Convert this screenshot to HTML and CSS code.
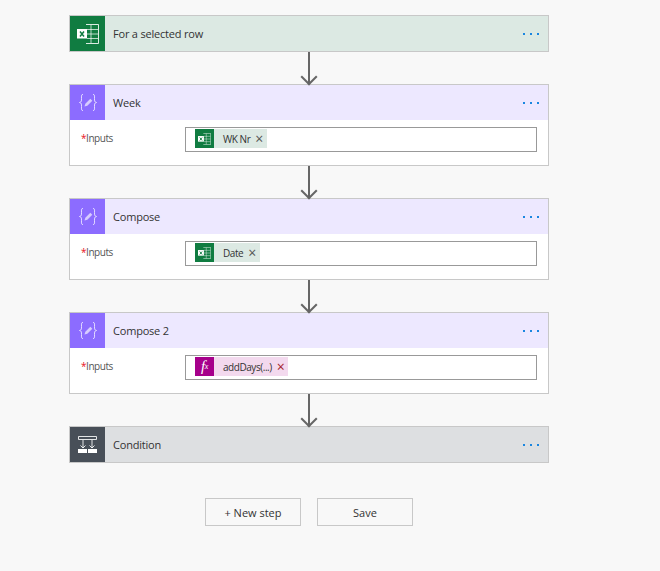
FILE: index.html
```html
<!DOCTYPE html>
<html lang="en">
<head>
  <meta charset="UTF-8">
  <meta name="viewport" content="width=device-width, initial-scale=1.0">
  <title>Flow editor</title>
  <link rel="stylesheet" href="styles.css">
</head>

<body>
  <!-- ===== ICONS ===== -->
  <svg class="defs" width="0" height="0">
    <symbol id="excel" viewBox="0 0 22 20">
      <path d="M9 .5h12.500v19H9" fill="none" stroke="#fff" stroke-opacity=".85"/>
      <path d="M14 1v18M10 5.500h11M10 10h11M10 14.500h11" fill="none" stroke="#fff" stroke-opacity=".7"/>
      <rect x="0" y="5" width="10" height="9.500" fill="#fff"/>
      <path d="M3 7.500l4 5M7 7.500l-4 5" stroke="#107c41" stroke-width="1.500"/>
    </symbol>
    <symbol id="braces" viewBox="0 0 18 17">
      <path d="M4 .5C2 .5 2.500 2 2.500 4.500S2.500 8 .5 8.500C2.500 9 2.500 10 2.500 12.500S2 16.500 4 16.500" fill="none" stroke="#fff" stroke-width=".9" stroke-opacity=".85"/>
      <path d="M14 .5C16 .5 15.500 2 15.500 4.500S15.500 8 17.500 8.500C15.500 9 15.500 10 15.500 12.500S16 16.500 14 16.500" fill="none" stroke="#fff" stroke-width=".9" stroke-opacity=".85"/>
      <path d="M5.500 12.500l.8-2.800 5-5 2 2-5 5z" fill="#fff" opacity=".65"/>
    </symbol>
    <symbol id="condition" viewBox="0 0 19 17">
      <path d="M.5.500h18v3H.5z" fill="none" stroke="#fff" stroke-opacity=".85"/>
      <path d="M5 4v8M14 4v8M2.500 9.500L5 12l2.500-2.500M11.500 9.500L14 12l2.500-2.500" fill="none" stroke="#fff" stroke-opacity=".85"/>
      <path d="M0 13h9v4H0zM10 13h9v4h-9z" fill="#fff"/>
    </symbol>
  </svg>

  <div class="flow">
    <!-- ===== TRIGGER ===== -->
    <div class="card card-excel">
      <div class="card-head">
        <span class="card-icon"><svg class="icon-excel"><use href="#excel"/></svg></span>
        <span class="card-title">For a selected row</span>
        <span class="dots"><i></i><i></i><i></i></span>
      </div>
    </div>
    <div class="arrow"></div>

    <!-- ===== WEEK ===== -->
    <div class="card card-compose">
      <div class="card-head">
        <span class="card-icon"><svg class="icon-braces"><use href="#braces"/></svg></span>
        <span class="card-title">Week</span>
        <span class="dots"><i></i><i></i><i></i></span>
      </div>
      <div class="card-body">
        <label class="field-label"><b>*</b>Inputs</label>
        <div class="field">
          <span class="chip chip-excel">
            <span class="chip-icon"><svg class="icon-chip"><use href="#excel"/></svg></span>
            <span class="chip-text">WK Nr</span>
            <span class="chip-x">×</span>
          </span>
        </div>
      </div>
    </div>
    <div class="arrow"></div>

    <!-- ===== COMPOSE ===== -->
    <div class="card card-compose">
      <div class="card-head">
        <span class="card-icon"><svg class="icon-braces"><use href="#braces"/></svg></span>
        <span class="card-title">Compose</span>
        <span class="dots"><i></i><i></i><i></i></span>
      </div>
      <div class="card-body">
        <label class="field-label"><b>*</b>Inputs</label>
        <div class="field">
          <span class="chip chip-excel">
            <span class="chip-icon"><svg class="icon-chip"><use href="#excel"/></svg></span>
            <span class="chip-text">Date</span>
            <span class="chip-x">×</span>
          </span>
        </div>
      </div>
    </div>
    <div class="arrow"></div>

    <!-- ===== COMPOSE 2 ===== -->
    <div class="card card-compose">
      <div class="card-head">
        <span class="card-icon"><svg class="icon-braces"><use href="#braces"/></svg></span>
        <span class="card-title">Compose 2</span>
        <span class="dots"><i></i><i></i><i></i></span>
      </div>
      <div class="card-body">
        <label class="field-label"><b>*</b>Inputs</label>
        <div class="field">
          <span class="chip chip-fx">
            <span class="chip-icon chip-fx-icon">f<sub>x</sub></span>
            <span class="chip-text">addDays(...)</span>
            <span class="chip-x">×</span>
          </span>
        </div>
      </div>
    </div>
    <div class="arrow"></div>

    <!-- ===== CONDITION ===== -->
    <div class="card card-condition">
      <div class="card-head">
        <span class="card-icon"><svg class="icon-condition"><use href="#condition"/></svg></span>
        <span class="card-title">Condition</span>
        <span class="dots"><i></i><i></i><i></i></span>
      </div>
    </div>

    <!-- ===== BUTTONS ===== -->
    <div class="actions">
      <button class="btn">+ New step</button>
      <button class="btn">Save</button>
    </div>
  </div>
</body>
</html>
```

FILE: styles.css
```css
html, body {
  margin: 0; padding: 0;
  height: 100%;
  background: #f8f8f8;
  overflow: hidden;
}

.defs { position: absolute; }

/* ---------------- Flow column ---------------- */
.flow {
  width: 480px;
  margin-left: 69px;
  padding-top: 15px;
  font: 11px/16px "Open Sans", "Noto Sans", sans-serif;
  color: #333;
}

/* ---------------- Cards ---------------- */
.card {
  border: 1px solid #c8c8c8;
  background: #fff;
}
.card-head {
  display: flex;
  align-items: center;
  height: 35px;
}
.card-icon {
  display: flex;
  align-items: center;
  justify-content: center;
  flex: none;
  width: 35px; height: 35px;
}
.card-title { flex: 1; margin-left: 8px; letter-spacing: -0.2px; }

.card-excel .card-head { background: #dce9e3; }
.card-excel .card-icon { background: #107c41; }
.card-compose .card-head { background: #ede8ff; }
.card-compose .card-icon { background: #8c6cff; }
.card-condition .card-head { background: #dddfe1; }
.card-condition .card-icon { background: #484f58; }

.icon-excel { width: 22px; height: 20px; }
.icon-braces { width: 18px; height: 17px; }
.icon-condition { width: 19px; height: 17px; }
.icon-chip { width: 13px; height: 12px; }

/* ---------------- Three dots ---------------- */
.dots { display: flex; gap: 4.500px; margin-right: 9px; }
.dots i { width: 2.500px; height: 2px; background: #1a86e0; }

/* ---------------- Inputs row ---------------- */
.card-body {
  display: flex;
  align-items: flex-start;
  padding: 7px 11px 13px 11px;
}
.field-label {
  width: 104px;
  flex: none;
  font-size: 10px;
  letter-spacing: -0.45px;
  line-height: 22px;
  color: #555;
}
.field-label b { color: #e81123; font-weight: normal; }
.field {
  flex: 1;
  display: flex;
  height: 19px;
  padding: 1px 9px 3px;
  border: 1px solid #999;
}

/* ---------------- Chips ---------------- */
.chip {
  display: flex;
  align-items: center;
  height: 19px;
  font-size: 10px;
  letter-spacing: -0.45px;
}
.chip-icon {
  display: flex;
  align-items: center;
  justify-content: center;
  width: 19px; height: 19px;
}
.chip-text { margin-left: 9px; }
.chip-x { margin: 0 4px 0 5px; font-size: 14px; line-height: 19px; color: #555; }

.chip-excel { background: #dce9e3; }
.chip-excel .chip-icon { background: #107c41; }
.chip-fx { background: #f3d9ee; }
.chip-fx .chip-x { color: #a4262c; }
.chip-fx-icon {
  background: #a6008b;
  color: #fff;
  font: italic 15px/19px "Liberation Serif", serif;
}
.chip-fx-icon sub { font-size: 8px; line-height: 0; }

/* ---------------- Arrows ---------------- */
.arrow {
  position: relative;
  width: 2px;
  height: 32px;
  margin-left: 239px;
  background: #666;
}
.arrow::after {
  content: "";
  position: absolute;
  left: -5px; bottom: 1px;
  width: 12px; height: 12px;
  border-right: 2px solid #666;
  border-bottom: 2px solid #666;
  box-sizing: border-box;
  transform: rotate(45deg);
}

/* ---------------- Buttons ---------------- */
.actions {
  display: flex;
  justify-content: center;
  gap: 16px;
  margin-top: 35px;
}
.btn {
  width: 96px; height: 28px;
  padding: 0;
  border: 1px solid #c8c8c8;
  background: #f8f8f8;
  font: 11px "Open Sans", "Noto Sans", sans-serif;
  color: #333;
}
```
